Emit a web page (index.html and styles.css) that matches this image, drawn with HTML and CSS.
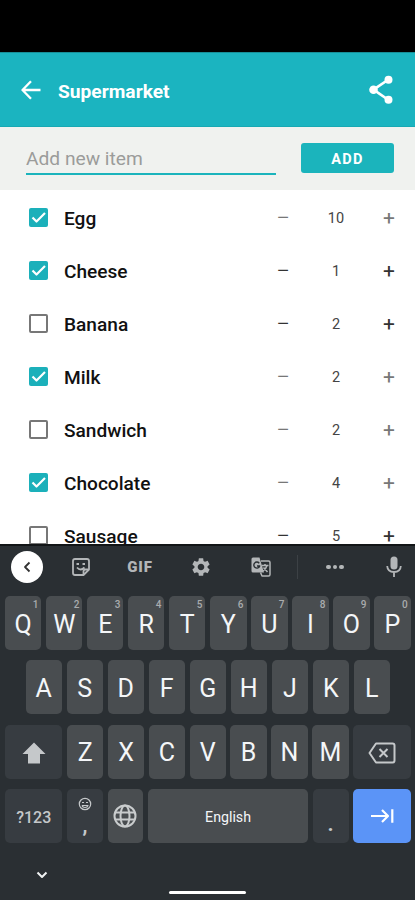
FILE: index.html
```html
<!DOCTYPE html>
<html lang="en">

<head>
    <meta charset="UTF-8">
    <meta name="viewport" content="width=device-width, initial-scale=1.0">
    <title>Supermarket</title>
    <link rel="stylesheet" href="styles.css">
</head>

<body>
    <div class="status-bar"></div>

    <header class="app-bar">
        <svg class="back" viewBox="0 0 20 20"><path d="M19.500 10H2M10 1.200L1.500 10L10 18.800" /></svg>
        <h1>Supermarket</h1>
        <svg class="share" viewBox="0 0 24 30">
            <path d="M19.500 4.500L4.500 14.700L19.500 25" />
            <circle cx="19.500" cy="4.700" r="4" />
            <circle cx="4.500" cy="14.700" r="4.300" />
            <circle cx="19.500" cy="24.700" r="4" />
        </svg>
    </header>

    <form class="add-form" autocomplete="off">
        <input type="text" placeholder="Add new item">
        <button type="button">ADD</button>
    </form>

    <ul class="items">
        <li>
            <span class="box checked"><svg viewBox="0 0 19 19"><path d="M3.500 9.500L7.500 13.500L16 5" /></svg></span>
            <span class="name">Egg</span>
            <span class="step minus">−</span><span class="qty">10</span><span class="step">+</span>
        </li>
        <li>
            <span class="box checked"><svg viewBox="0 0 19 19"><path d="M3.500 9.500L7.500 13.500L16 5" /></svg></span>
            <span class="name">Cheese</span>
            <span class="step minus dark">−</span><span class="qty">1</span><span class="step dark">+</span>
        </li>
        <li>
            <span class="box"></span>
            <span class="name">Banana</span>
            <span class="step minus dark">−</span><span class="qty">2</span><span class="step dark">+</span>
        </li>
        <li>
            <span class="box checked"><svg viewBox="0 0 19 19"><path d="M3.500 9.500L7.500 13.500L16 5" /></svg></span>
            <span class="name">Milk</span>
            <span class="step minus">−</span><span class="qty">2</span><span class="step">+</span>
        </li>
        <li>
            <span class="box"></span>
            <span class="name">Sandwich</span>
            <span class="step minus">−</span><span class="qty">2</span><span class="step">+</span>
        </li>
        <li>
            <span class="box checked"><svg viewBox="0 0 19 19"><path d="M3.500 9.500L7.500 13.500L16 5" /></svg></span>
            <span class="name">Chocolate</span>
            <span class="step minus">−</span><span class="qty">4</span><span class="step">+</span>
        </li>
        <li>
            <span class="box"></span>
            <span class="name">Sausage</span>
            <span class="step minus dark">−</span><span class="qty">5</span><span class="step dark">+</span>
        </li>
    </ul>

    <div class="keyboard">
        <div class="toolbar">
            <span class="collapse"><svg viewBox="0 0 12 12"><path d="M8.500 1.500L4 6L8.500 10.500" /></svg></span>
            <span class="tool sticker">
                <svg viewBox="0 0 20 20">
                    <path d="M4 2H16Q18 2 18 4V12.500L12.500 18H4Q2 18 2 16V4Q2 2 4 2Z" />
                    <path d="M17.500 12.500H14.500Q12.500 12.500 12.500 14.500V17.500" />
                    <path d="M5.500 7H8M11.500 7H14M6 10.500Q9.500 14.500 13.500 10.500" />
                </svg>
            </span>
            <span class="tool gif">GIF</span>
            <span class="tool gear">
                <svg viewBox="0 0 24 24"><path fill-rule="evenodd" d="M19.140 12.940c.04-.3.06-.61.06-.94 0-.32-.02-.64-.07-.94l2.030-1.580c.18-.14.23-.41.12-.61l-1.920-3.320c-.12-.22-.37-.29-.59-.22l-2.390.96c-.5-.38-1.030-.7-1.620-.94l-.36-2.540c-.04-.24-.24-.41-.48-.41h-3.840c-.24 0-.43.17-.47.41l-.36 2.540c-.59.24-1.130.57-1.620.94l-2.390-.96c-.22-.08-.47 0-.59.22L2.740 8.870c-.12.21-.08.47.12.61l2.030 1.580c-.05.3-.09.63-.09.94s.02.64.07.94l-2.030 1.580c-.18.14-.23.41-.12.61l1.920 3.320c.12.22.37.29.59.22l2.390-.96c.5.38 1.030.7 1.620.94l.36 2.540c.05.24.24.41.48.41h3.840c.24 0 .44-.17.47-.41l.36-2.540c.59-.24 1.130-.56 1.620-.94l2.390.96c.22.08.47 0 .59-.22l1.920-3.320c.12-.22.07-.47-.12-.61l-2.010-1.580zM12 15.600c-1.980 0-3.600-1.620-3.600-3.600s1.620-3.600 3.600-3.600 3.600 1.620 3.600 3.600-1.620 3.600-3.600 3.600z" /></svg>
            </span>
            <span class="tool translate">
                <svg viewBox="0 0 20 20">
                    <path class="solid" d="M2 0.500H8.500L13 15.500H2Q0.500 15.500 0.500 14V2Q0.500 0.500 2 0.500Z" />
                    <path class="cut" d="M8.200 6.200A3 3 0 1 0 8.700 9H6" />
                    <path class="line" d="M10 4H17.500Q19 4 19 5.500V17.500Q19 19 17.500 19H11L9.500 15.500M11 8.500H17.500M14 7V8.500M16 8.500Q15 12 12 14M12.500 10.500L16.500 15" />
                </svg>
            </span>
            <span class="divider"></span>
            <span class="tool more"><i></i><i></i><i></i></span>
            <span class="tool mic">
                <svg viewBox="0 0 16 22">
                    <rect x="4.500" y="0.500" width="7" height="13" rx="3.500" />
                    <path d="M1.200 10Q1.500 16 8 16Q14.500 16 14.800 10M8 16V21" />
                </svg>
            </span>
        </div>

        <div class="keys">
            <div class="row">
                <span class="key">Q<sup>1</sup></span>
                <span class="key">W<sup>2</sup></span>
                <span class="key">E<sup>3</sup></span>
                <span class="key">R<sup>4</sup></span>
                <span class="key">T<sup>5</sup></span>
                <span class="key">Y<sup>6</sup></span>
                <span class="key">U<sup>7</sup></span>
                <span class="key">I<sup>8</sup></span>
                <span class="key">O<sup>9</sup></span>
                <span class="key">P<sup>0</sup></span>
            </div>
            <div class="row middle">
                <span class="key">A</span>
                <span class="key">S</span>
                <span class="key">D</span>
                <span class="key">F</span>
                <span class="key">G</span>
                <span class="key">H</span>
                <span class="key">J</span>
                <span class="key">K</span>
                <span class="key">L</span>
            </div>
            <div class="row">
                <span class="key wide dim shift">
                    <svg viewBox="0 0 24 22"><path d="M12 0.500L23.500 12H18V21.500H6V12H0.500Z" /></svg>
                </span>
                <span class="key">Z</span>
                <span class="key">X</span>
                <span class="key">C</span>
                <span class="key">V</span>
                <span class="key">B</span>
                <span class="key">N</span>
                <span class="key">M</span>
                <span class="key wide dim backspace">
                    <svg viewBox="0 0 28 22"><path d="M8 1.500H24.500Q26.500 1.500 26.500 3.500V18.500Q26.500 20.500 24.500 20.500H8L1.500 11ZM11.500 7L19.500 15M19.500 7L11.500 15" /></svg>
                </span>
            </div>
            <div class="row">
                <span class="key wide dim symbols">?123</span>
                <span class="key dim comma">
                    <svg viewBox="0 0 14 14">
                        <circle cx="7" cy="7" r="5.700" />
                        <path d="M4 5.500H6M8 5.500H10M4 8.500H10Q9.500 10.500 7 10.500Q4.500 10.500 4 8.500" />
                    </svg>
                    <b>,</b>
                </span>
                <span class="key globe">
                    <svg viewBox="0 0 24 24">
                        <circle cx="12" cy="12" r="10.500" />
                        <ellipse cx="12" cy="12" rx="4.500" ry="10.500" />
                        <path d="M2.500 8.500H21.500M2.500 15.500H21.500" />
                    </svg>
                </span>
                <span class="key space">English</span>
                <span class="key dim period">.</span>
                <span class="key wide enter">
                    <svg viewBox="0 0 24 16"><path d="M1 8H17M12 2L18 8L12 14M22.300 1.200V14.800" /></svg>
                </span>
            </div>
        </div>

        <div class="nav">
            <svg class="hide" viewBox="0 0 12 8"><path d="M1.500 1.500L6 6L10.500 1.500" /></svg>
            <span class="home"></span>
        </div>
    </div>
</body>

</html>
```

FILE: styles.css
```css
* {
    box-sizing: border-box;
}

body {
    display: flex;
    flex-direction: column;
    height: 900px;
    margin: 0;
    overflow: hidden;
    background: #fff;
    font-family: Roboto, "Liberation Sans", sans-serif;
}

svg {
    display: block;
    fill: none;
    stroke-linejoin: round;
}

.status-bar {
    flex: none;
    height: 52px;
    background: #000;
}

.app-bar {
    flex: none;
    display: flex;
    align-items: center;
    height: 75px;
    padding: 0 22px 0 21px;
    background: #1bb4c0;
    border-top: 1px solid #178f98;
    border-bottom: 1px solid #17a9b3;
}

.back {
    width: 20px;
    height: 20px;
    stroke: #fff;
    stroke-width: 2.3;
}

.app-bar h1 {
    flex: 1;
    margin: 3px 0 0 17px;
    color: #fff;
    font-size: 19.2px;
    font-weight: 700;
}

.share {
    width: 24px;
    height: 30px;
    stroke: #fff;
    stroke-width: 2.7;
}

.share circle {
    fill: #fff;
    stroke: none;
}

.add-form {
    flex: none;
    display: flex;
    align-items: flex-start;
    justify-content: space-between;
    height: 63px;
    padding: 16px 21px 0 26px;
    background: #f0f2ef;
}

.add-form input {
    width: 250px;
    height: 32px;
    padding: 0;
    border: 0;
    border-bottom: 2px solid #1bb4bc;
    background: none;
    font-family: inherit;
    font-size: 19.2px;
}

.add-form input::placeholder {
    color: #9b9c9a;
}

.add-form button {
    width: 93px;
    height: 30px;
    padding: 2px 0 0;
    border: 0;
    border-radius: 3px;
    background: #1bb4bc;
    color: #fff;
    font-family: inherit;
    font-size: 14.5px;
    font-weight: 700;
    letter-spacing: 1.3px;
}

.items {
    flex: none;
    height: 354px;
    margin: 0;
    padding: 1px 16px 0 29px;
    overflow: hidden;
    list-style: none;
}

.items li {
    display: flex;
    align-items: center;
    height: 53px;
}

.box {
    width: 19px;
    height: 19px;
    border: 2px solid #777;
    border-radius: 2px;
}

.box.checked {
    border: 0;
    background: #1bb0ba;
}

.box path {
    stroke: #fff;
    stroke-width: 2.2;
}

.name {
    flex: 1;
    padding: 1px 0 0 16px;
    color: #111;
    font-size: 19.1px;
    font-weight: 500;
}

.step {
    width: 20px;
    color: #777;
    font-size: 21px;
    line-height: 24px;
    text-align: center;
}

.step.minus {
    font-size: 24px;
    font-weight: 300;
}

.step.dark {
    color: #333;
}

.qty {
    width: 86px;
    padding-top: 1px;
    color: #444;
    font-size: 14.5px;
    text-align: center;
}

.keyboard {
    flex: 1;
    background: #2a2f33;
    border-top: 2px solid #121517;
}

.toolbar {
    display: flex;
    align-items: center;
    height: 42px;
    padding: 0 13px 0 11px;
    color: #b3b6b8;
}

.collapse {
    display: flex;
    align-items: center;
    justify-content: center;
    width: 32px;
    height: 32px;
    border-radius: 50%;
    background: #fff;
}

.collapse svg {
    width: 12px;
    height: 12px;
    stroke: #333;
    stroke-width: 1.8;
}

.tool {
    display: flex;
    align-items: center;
    justify-content: center;
}

.tool svg {
    width: 20px;
    height: 20px;
    stroke: currentColor;
    stroke-width: 1.8;
}

.sticker {
    width: 20px;
    margin-left: 28px;
}

.gif {
    width: 30px;
    margin-left: 34px;
    font-size: 15px;
    font-weight: 900;
    letter-spacing: 0.8px;
}

.gear {
    margin-left: 35px;
}

.gear svg {
    width: 22px;
    height: 22px;
    fill: currentColor;
    stroke: none;
}

.translate {
    margin-left: 39px;
}

.translate .solid {
    fill: currentColor;
    stroke: none;
}

.translate .cut {
    stroke: #2a2f33;
    stroke-width: 1.4;
}

.translate .line {
    stroke-width: 1.5;
}

.divider {
    width: 1px;
    height: 24px;
    margin-left: 26px;
    background: #3c4145;
}

.more {
    gap: 2px;
    margin-left: 28px;
}

.more i {
    width: 4.6px;
    height: 4.6px;
    border-radius: 50%;
    background: currentColor;
}

.mic {
    margin-left: auto;
}

.mic svg {
    width: 16px;
    height: 22px;
}

.mic rect {
    fill: currentColor;
    stroke: none;
}

.keys {
    display: flex;
    flex-direction: column;
    gap: 10.4px;
    padding: 8px 4.5px 0 5px;
}

.row {
    display: flex;
    gap: 4.6px;
    height: 54px;
}

.row.middle {
    padding: 0 20.5px;
}

.key {
    position: relative;
    flex: 1 1 0;
    display: flex;
    align-items: center;
    justify-content: center;
    padding-top: 2px;
    border-radius: 5px;
    background: #494d50;
    color: #f4f6f8;
    font-size: 25px;
}

.key.wide {
    flex: 0 0 57.4px;
}

.key.dim {
    background: #373c41;
    color: #c5c8ca;
}

.key svg {
    stroke: currentColor;
}

/* number hint in the key's corner */
.key sup {
    position: absolute;
    top: 3px;
    right: 3px;
    color: #a9acae;
    font-size: 10px;
    font-weight: 500;
    line-height: 11px;
}

.shift svg {
    width: 24px;
    height: 22px;
    fill: currentColor;
    stroke: none;
}

.backspace svg {
    width: 28px;
    height: 22px;
    stroke-width: 2;
}

.key.symbols {
    font-size: 16px;
    font-weight: 500;
}

.key.comma {
    flex-direction: column;
    gap: 3px;
    padding-top: 0;
}

.comma svg {
    width: 14px;
    height: 14px;
    stroke-width: 1.2;
}

.comma b {
    font-size: 20px;
    line-height: 22px;
}

.key.globe {
    color: #c9cccd;
    padding-top: 0;
}

.globe svg {
    width: 24px;
    height: 24px;
    stroke-width: 2;
}

.key.space {
    flex: 0 0 160px;
    font-size: 14.2px;
}

.key.period {
    align-items: flex-end;
    padding-bottom: 7px;
    font-size: 21px;
    font-weight: 700;
}

.key.enter {
    background: #5b94f7;
    color: #fff;
    padding-top: 0;
}

.enter svg {
    width: 24px;
    height: 16px;
    stroke-width: 2.2;
}

.nav {
    display: grid;
    grid-template-columns: 1fr 77px 1fr;
    height: 56px;
    padding-top: 28px;
}

.hide {
    width: 12px;
    height: 8px;
    margin-left: 36px;
    stroke: #f0f2f3;
    stroke-width: 2;
}

.home {
    height: 3px;
    margin-top: 20px;
    border-radius: 2px;
    background: #fff;
}
```
